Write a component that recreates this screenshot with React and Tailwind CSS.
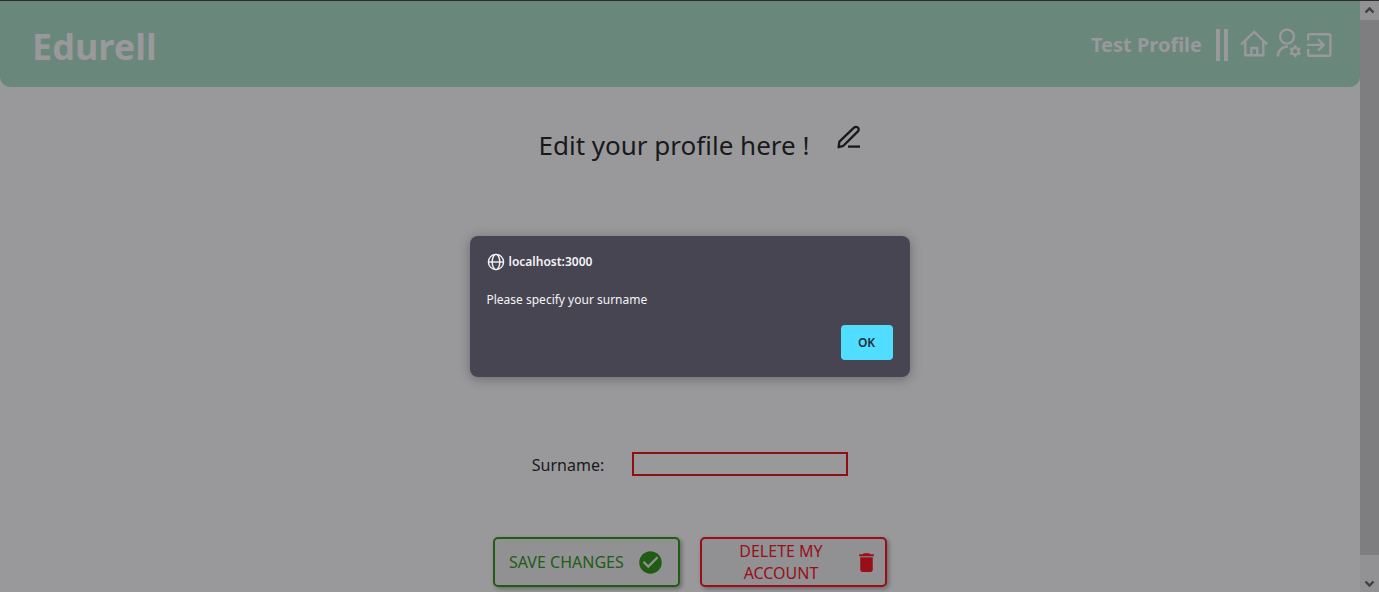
import { MdCheckCircle, MdDelete } from "react-icons/md";

function HomeIcon() {
  return (
    <svg viewBox="0 0 28 30" className="h-[30px] w-7" fill="none" stroke="currentColor" strokeWidth="2.4">
      <path d="M1.2 14.4L14.2 1.8l13 12.6" />
      <path d="M5.3 11v14.2h18V11M11.3 25v-7h6v7" strokeLinejoin="round" />
    </svg>
  );
}

function UserSettingsIcon() {
  return (
    <svg viewBox="0 0 26 34" className="h-[34px] w-[26px]" fill="none" stroke="currentColor" strokeWidth="2.4">
      <circle cx="11" cy="8.6" r="7" />
      <path d="M1.8 28.5C1.8 22.5 6 18.7 12 18.5" />
      <circle cx="19.2" cy="23.3" r="3.4" />
      <path d="M19.2 17.3v3M19.2 26.3v3M14 20.3l2.6 1.5M21.8 24.8l2.6 1.5M14 26.3l2.6-1.5M21.8 21.8l2.6-1.5" />
    </svg>
  );
}

function ExitIcon() {
  return (
    <svg viewBox="0 0 26 30" className="h-[30px] w-[26px]" fill="none" stroke="currentColor" strokeWidth="2.4">
      <path d="M2.2 10.5V5.6Q2.2 4.2 3.6 4.2h19Q24.4 4.2 24.4 6v18.2q0 1.6-1.8 1.6h-19q-1.4 0-1.4-1.4v-5.4" />
      <path d="M1 14.9h16M12 9.2l5.7 5.7L12 20.6" />
    </svg>
  );
}

function PencilIcon() {
  return (
    <svg viewBox="0 0 24 24" className="size-6" fill="none" stroke="currentColor" strokeWidth="2.3" strokeLinejoin="round">
      <path d="M1.6 22.2l.8-5.6L17 2.6a2.7 2.7 0 0 1 3.9 3.8L6.4 20.8z" />
      <path d="M11 21.6h12" />
    </svg>
  );
}

function Header() {
  return (
    <header className="flex h-[86px] items-center justify-between rounded-b-[10px] bg-[#6a877b] pt-0.5 pr-7 pl-8 text-[#99989b]">
      <h1 className="pt-1 text-4xl leading-none font-bold">Edurell</h1>
      <nav className="flex items-center">
        <span className="text-xl font-bold">Test Profile</span>
        <span className="ml-[14px] flex gap-1">
          <span className="h-8 w-1 bg-[#99989b]" />
          <span className="h-8 w-1 bg-[#99989b]" />
        </span>
        <a href="#home" aria-label="Home" className="ml-3">
          <HomeIcon />
        </a>
        <a href="#settings" aria-label="Profile settings" className="ml-2">
          <UserSettingsIcon />
        </a>
        <a href="#logout" aria-label="Log out" className="ml-1">
          <ExitIcon />
        </a>
      </nav>
    </header>
  );
}

function AlertDialog() {
  return (
    <div
      role="alertdialog"
      aria-labelledby="alert-title"
      aria-describedby="alert-text"
      className="absolute top-[235px] left-1/2 flex w-[440px] -translate-x-1/2 flex-col rounded-lg bg-[#484552] px-[17px] pt-4 pb-[17px] text-[#f4f4f6] shadow-[0_2px_12px_rgba(0,0,0,0.3)]"
    >
      <div className="flex h-5 items-center gap-1">
        <svg viewBox="0 0 18 18" className="size-[18px]" fill="none" stroke="currentColor" strokeWidth="1.4">
          <circle cx="9" cy="9" r="7.6" />
          <ellipse cx="9" cy="9" rx="3.8" ry="7.6" />
          <path d="M1.4 9h15.2" />
        </svg>
        <h2 id="alert-title" className="text-xs font-semibold">localhost:3000</h2>
      </div>
      <p id="alert-text" className="mt-[18px] text-xs leading-5">Please specify your surname</p>
      <button type="button" className="mt-[15px] h-[35px] w-[52px] self-end rounded-[4px] bg-[#50ddff] text-xs font-semibold text-[#1d2c38]">
        OK
      </button>
    </div>
  );
}

function Scrollbar() {
  return (
    <div aria-hidden="true" className="flex w-[19px] flex-col items-center bg-[#929294] text-[#3f3f42]">
      <svg viewBox="0 0 19 19" className="size-[19px]" fill="none" stroke="currentColor" strokeWidth="2.4">
        <path d="M5.5 11.5l4-4 4 4" />
      </svg>
      <div className="w-full flex-1 bg-[#7e7e80]" />
      <svg viewBox="0 0 19 37" className="h-[37px] w-[19px]" fill="none" stroke="currentColor" strokeWidth="2.4">
        <path d="M5.5 26.5l4 4 4-4" />
      </svg>
    </div>
  );
}

export default function App() {
  return (
    <div className="relative flex h-screen overflow-hidden border-t border-[#2b2a33] bg-[#99999b] font-['Noto_Sans',sans-serif] text-[#19191b]">
      <div className="min-w-0 flex-1">
        <Header />
        <main className="flex flex-col items-center">
          <div className="mt-[38px] ml-10 flex gap-7">
            <h2 className="pt-0.5 text-[26px] leading-9">Edit your profile here !</h2>
            <PencilIcon />
          </div>
          <form className="mt-[288px] ml-5 flex flex-col items-center" onSubmit={(e) => e.preventDefault()}>
            <div className="flex items-center gap-7">
              <label htmlFor="surname" className="pt-0.5 text-base">Surname:</label>
              <input id="surname" type="text" className="h-6 w-[216px] border-2 border-[#900d12] bg-transparent px-1 text-sm outline-none" />
            </div>
            <div className="mt-[60px] flex gap-5">
              <button type="submit" className="flex h-[50px] w-[187px] items-center justify-between rounded-[5px] border-2 border-[#205c14] bg-[#919193] px-[14px] text-base text-[#205c14] shadow-[2px_2px_4px_rgba(0,0,0,0.3)]">
                SAVE CHANGES
                <MdCheckCircle size={27} />
              </button>
              <button type="button" className="flex h-[50px] w-[187px] items-center justify-between rounded-[5px] border-2 border-[#990f17] bg-[#919193] pr-[6px] pl-[6px] text-base leading-[22px] text-[#990f17] shadow-[2px_2px_4px_rgba(0,0,0,0.3)]">
                <span className="flex-1">DELETE MY<br />ACCOUNT</span>
                <MdDelete size={25} />
              </button>
            </div>
          </form>
        </main>
      </div>
      <Scrollbar />
      <AlertDialog />
    </div>
  );
}
